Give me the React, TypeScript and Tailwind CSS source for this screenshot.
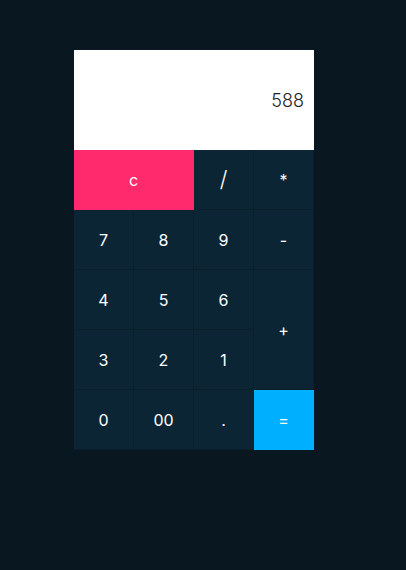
const keys: { label: string; cls?: string }[] = [
  { label: "c", cls: "col-span-2 bg-[#ff2a6e] border-[#ff2a6e] text-[15px]" },
  { label: "/", cls: "text-[22px] font-light" },
  { label: "*" },
  { label: "7" },
  { label: "8" },
  { label: "9" },
  { label: "-" },
  { label: "4" },
  { label: "5" },
  { label: "6" },
  { label: "+", cls: "row-span-2" },
  { label: "3" },
  { label: "2" },
  { label: "1" },
  { label: "0" },
  { label: "00" },
  { label: "." },
  { label: "=", cls: "bg-[#00b0ff] border-[#00b0ff]" },
];

export default function App() {
  return (
    <div className="min-h-[570px] w-full bg-[#091820] pt-[50px] font-['Inter',sans-serif]">
      <div className="ml-[74px] w-[240px]">
        <div className="flex h-[100px] items-center justify-end bg-white pr-[10px] text-[18px] font-light text-[#222]">
          588
        </div>
        <div className="grid grid-cols-4 auto-rows-[60px]">
          {keys.map((k) => {
            const colored = k.cls?.includes("bg-");
            return (
              <button
                key={k.label}
                className={`flex items-center justify-center border-r border-b text-[16px] text-white ${
                  colored ? "" : "bg-[#0c2535] border-[#0a1f2b]"
                } ${k.cls ?? ""}`}
              >
                {k.label}
              </button>
            );
          })}
        </div>
      </div>
    </div>
  );
}
